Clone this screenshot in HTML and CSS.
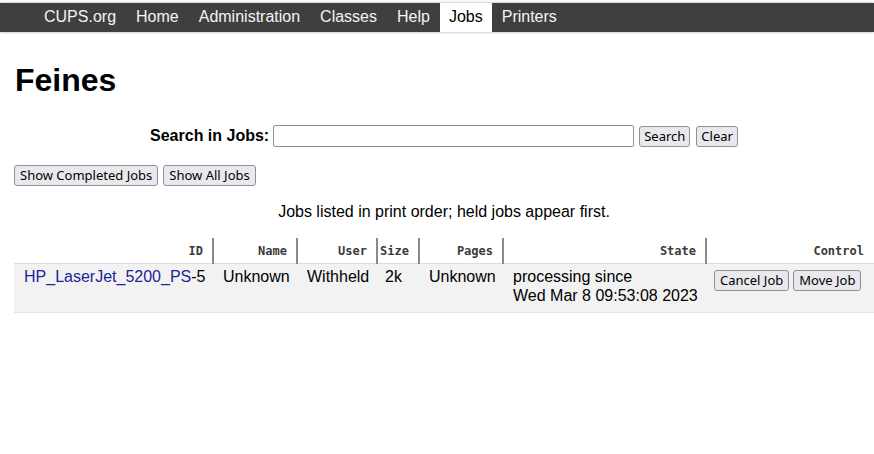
FILE: index.html
```html
<!DOCTYPE html>
<html>
<head>
<meta charset="utf-8">
<title>Feines - CUPS</title>
<link rel="stylesheet" href="styles.css">
</head>
<body>
<div class="header">
  <ul class="nav">
    <li><a href="#">CUPS.org</a></li>
    <li><a href="#">Home</a></li>
    <li><a href="#">Administration</a></li>
    <li><a href="#">Classes</a></li>
    <li><a href="#">Help</a></li>
    <li class="active"><a href="#">Jobs</a></li>
    <li><a href="#">Printers</a></li>
  </ul>
</div>
<div class="body">
  <h1 class="title">Feines</h1>
  <form class="search">
    <label class="search-label">Search in Jobs:</label>
    <input class="search-input" type="search">
    <button class="btn btn-search" type="button">Search</button>
    <button class="btn btn-clear" type="button">Clear</button>
  </form>
  <div class="filters">
    <button class="btn" type="button">Show Completed Jobs</button>
    <button class="btn" type="button">Show All Jobs</button>
  </div>
  <p class="info">Jobs listed in print order; held jobs appear first.</p>
  <table class="list">
    <colgroup>
      <col class="c1"><col class="c2"><col class="c3"><col class="c4"><col class="c5"><col class="c6"><col class="c7">
    </colgroup>
    <thead>
      <tr>
        <th>ID</th>
        <th>Name</th>
        <th>User</th>
        <th class="size">Size</th>
        <th>Pages</th>
        <th>State</th>
        <th class="last">Control</th>
      </tr>
    </thead>
    <tbody>
      <tr>
        <td><a class="joblink" href="#">HP_LaserJet_5200_PS</a>-5</td>
        <td>Unknown</td>
        <td>Withheld</td>
        <td class="size-cell">2k</td>
        <td>Unknown</td>
        <td>processing since<br>Wed Mar 8 09:53:08 2023</td>
        <td class="controls"><button class="btn" type="button">Cancel Job</button><button class="btn" type="button">Move Job</button></td>
      </tr>
    </tbody>
  </table>
</div>
</body>
</html>
```

FILE: styles.css
```css
html, body {
  margin: 0;
  padding: 0;
  background: #fff;
  font-family: "Liberation Sans", Arial, sans-serif;
  font-size: 16px;
  color: #000;
}

.header {
  margin-top: 3px;
  background: #3f3f3f;
  box-shadow: 0 0 3px rgba(0, 0, 0, 0.35);
  height: 29px;
}

.nav {
  list-style: none;
  margin: 0;
  padding: 0 0 0 34px;
  display: flex;
  height: 29px;
}

.nav li a {
  display: block;
  height: 29px;
  line-height: 28px;
  padding: 0 10px;
  color: #f4f4f4;
  text-decoration: none;
  font-size: 16px;
}

.nav li.active a {
  background: #fff;
  color: #000;
  padding: 0 9px;
}

.body {
  padding: 0 0 0 14px;
}

.title {
  margin: 30px 0 0 1px;
  font-size: 32px;
  font-weight: bold;
  line-height: 37px;
}

.btn {
  font-family: "Noto Sans", "DejaVu Sans", sans-serif;
  font-size: 13px;
  line-height: 17px;
  height: 21px;
  padding: 1px 5px;
  margin: 0;
  border: 1px solid #8f8f9d;
  border-radius: 3px;
  background: #e9e9ed;
  color: #000;
  box-sizing: border-box;
}

.search {
  margin: 26px 0 0 0;
  display: flex;
  justify-content: center;
  align-items: center;
}

.search-label {
  font-weight: bold;
  margin-right: 4px;
}

.search-input {
  width: 361px;
  height: 22px;
  box-sizing: border-box;
  border: 1px solid #8f8f9d;
  border-radius: 2px;
  margin: 0 5px 0 0;
  padding: 0;
}

.search .btn-search {
  padding: 1px 4px;
}

.search .btn-clear {
  margin-left: 6px;
  padding: 1px 4px;
}

.filters {
  margin-top: 18px;
  display: flex;
  gap: 5px;
}

.info {
  text-align: center;
  margin: 17px 0 0 0;
  line-height: 18px;
}

.list {
  margin-top: 17px;
  width: 860px;
  border-collapse: collapse;
  table-layout: fixed;
}

.c1 { width: 199px; }
.c2 { width: 84px; }
.c3 { width: 80px; }
.c4 { width: 42px; }
.c5 { width: 84px; }
.c6 { width: 203px; }
.c7 { width: 168px; }

.list th {
  font-family: "DejaVu Sans Mono", monospace;
  font-size: 12px;
  font-weight: bold;
  color: #3a3a3a;
  text-align: right;
  padding: 4px 9px 4px 2px;
  border-right: 2px solid #8a8a8a;
  border-bottom: 1px solid #ddd;
  height: 17px;
  white-space: nowrap;
}

.list th.size { text-align: left; padding-left: 2px; }
.list th.last { border-right: none; padding-right: 10px; }

.list td {
  background: #f2f2f2;
  vertical-align: top;
  padding: 3px 4px 7px 10px;
  line-height: 19px;
  text-align: left;
  border-bottom: 1px solid #e4e4e4;
  white-space: nowrap;
}

.list td.size-cell {
  padding-left: 8px;
}

.list td.controls {
  padding: 6px 4px 4px 8px;
}

.controls .btn + .btn {
  margin-left: 4px;
}

.joblink {
  color: #1b2596;
  text-decoration: none;
}
```
